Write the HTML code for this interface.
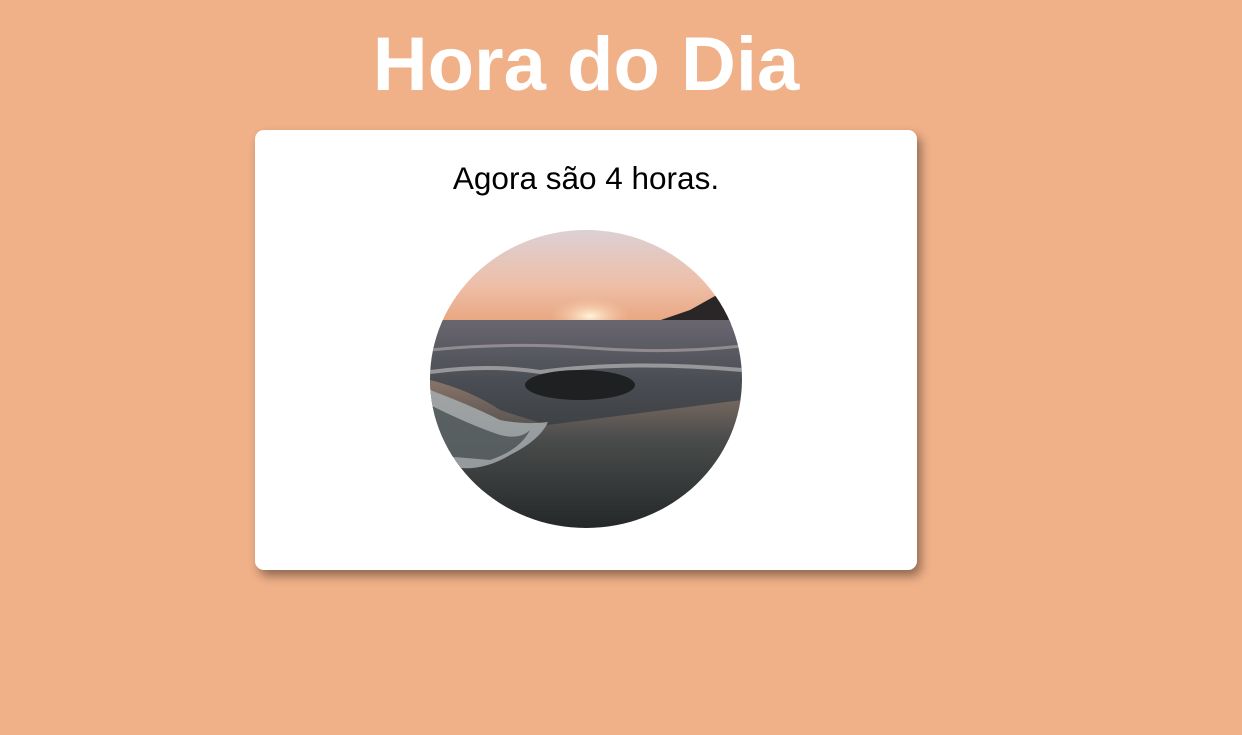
<!DOCTYPE html>
<html><head><meta charset="utf-8"><style>
html,body{margin:0;padding:0;}
body{width:1242px;height:735px;background:#f0b088;font-family:"Liberation Sans",sans-serif;position:relative;overflow:hidden;}
h1{position:absolute;left:0;width:1172px;top:22px;margin:0;text-align:center;color:#fff;font-size:76px;font-weight:bold;line-height:86px;}
.card{position:absolute;left:255px;top:130px;width:662px;height:440px;background:#fff;border-radius:9px;box-shadow:4px 6px 10px rgba(0,0,0,0.4);}
.t{position:absolute;width:662px;top:160px;text-align:center;font-size:31.5px;color:#000;}
svg{position:absolute;left:430px;top:230px;}
</style></head><body>
<h1>Hora do Dia</h1>
<div class="card"></div>
<div class="t" style="left:255px">Agora são 4 horas.</div>
<svg width="312" height="298" viewBox="0 0 312 298">
<defs>
<clipPath id="c"><ellipse cx="156" cy="149" rx="156" ry="149"/></clipPath>
<linearGradient id="sky" x1="0" y1="0" x2="0" y2="1">
<stop offset="0" stop-color="#dcd0d4"/><stop offset="0.6" stop-color="#eebfa8"/><stop offset="1" stop-color="#e8a680"/></linearGradient>
<radialGradient id="sun" cx="0.5" cy="0.5" r="0.5"><stop offset="0" stop-color="#fff4dc"/><stop offset="1" stop-color="#f6c8a4" stop-opacity="0"/></radialGradient>
<linearGradient id="sea" x1="0" y1="0" x2="0" y2="1">
<stop offset="0" stop-color="#6a6670"/><stop offset="0.5" stop-color="#4a4e54"/><stop offset="1" stop-color="#3a3e40"/></linearGradient>
<linearGradient id="sand" x1="0" y1="0" x2="0" y2="1">
<stop offset="0" stop-color="#8a7468"/><stop offset="0.4" stop-color="#4a4c4c"/><stop offset="1" stop-color="#242828"/></linearGradient>
</defs>
<g clip-path="url(#c)">
<rect width="312" height="92" fill="url(#sky)"/>
<ellipse cx="160" cy="86" rx="40" ry="18" fill="url(#sun)"/>
<path d="M225 92 L260 80 L285 66 L300 70 L312 72 L312 94 Z" fill="#2a2628"/>
<rect y="90" width="312" height="120" fill="url(#sea)"/>
<path d="M0 120 Q80 112 160 118 T312 116" stroke="#a8a0a4" stroke-width="3" fill="none" opacity="0.7"/>
<path d="M0 142 Q60 134 110 142 Q200 130 312 140" stroke="#c8c4c4" stroke-width="4" fill="none" opacity="0.6"/>
<ellipse cx="150" cy="155" rx="55" ry="15" fill="#1e2022"/>
<path d="M0 150 Q40 160 70 180 Q100 190 118 195 L312 170 L312 298 L0 298 Z" fill="url(#sand)"/>
<path d="M0 160 Q40 175 70 190 Q95 195 118 192 Q110 210 80 225 Q55 240 30 238 L0 230 Z" fill="#aab2b4" opacity="0.8"/>
<path d="M0 175 Q40 195 70 205 Q90 210 100 200 Q90 220 60 230 L0 225 Z" fill="#3c4446" opacity="0.7"/>
</g>
</svg>
</body></html>
